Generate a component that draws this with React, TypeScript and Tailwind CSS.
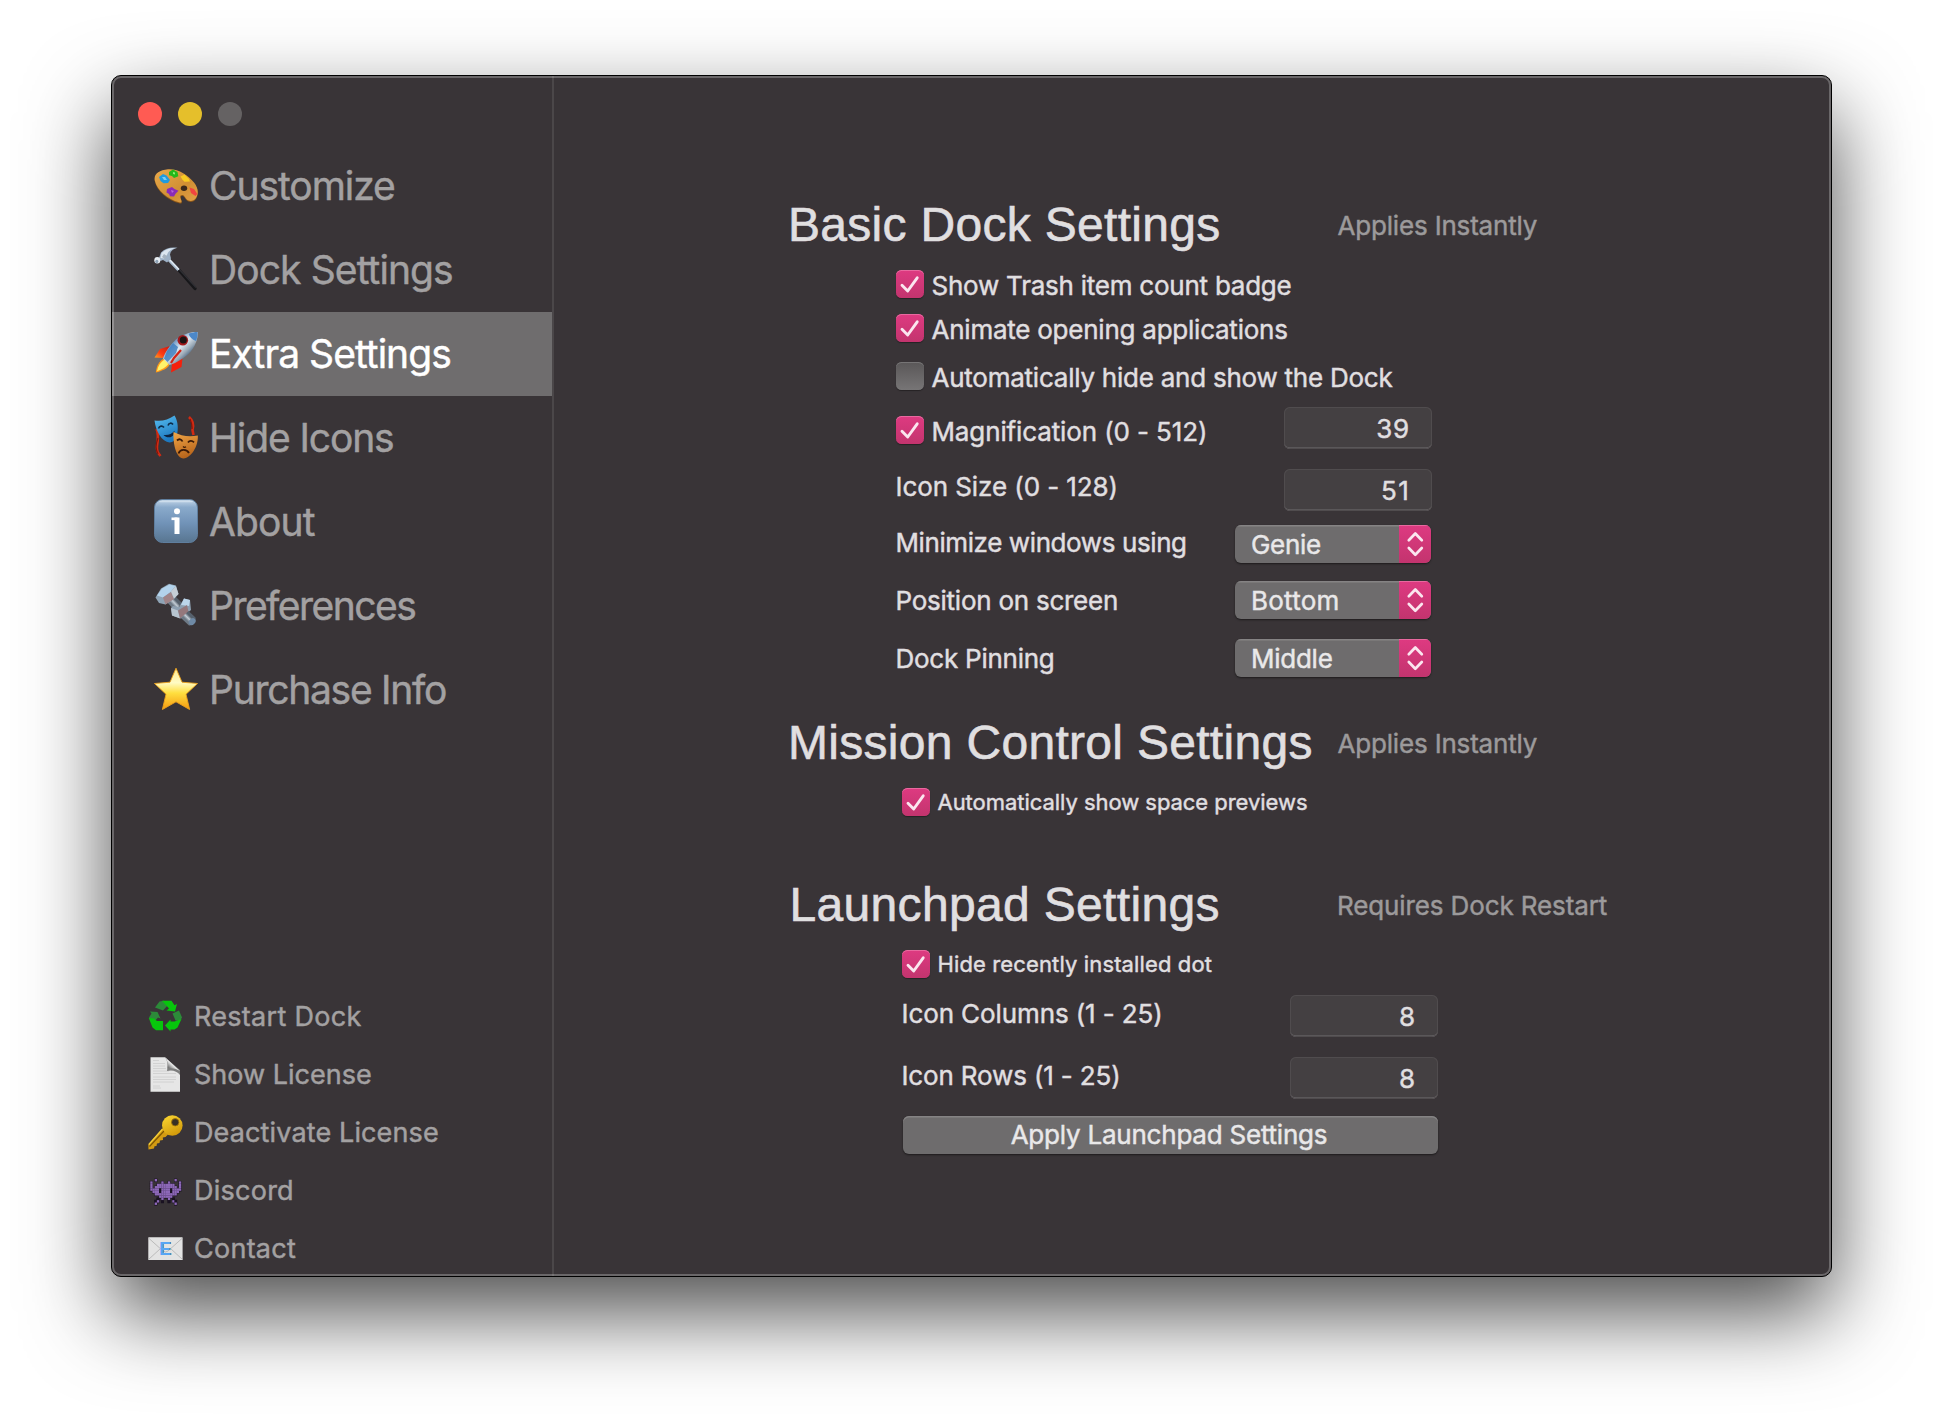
import React from 'react';

/* ---------- sidebar pictograms ---------- */

const Palette = () => (
  <svg viewBox="0 0 44 44" className="size-11">
    <defs>
      <linearGradient id="wood" x1="0" y1="0" x2="1" y2="1">
        <stop offset="0" stopColor="#e8a94c" />
        <stop offset="0.6" stopColor="#d08f33" />
        <stop offset="1" stopColor="#e2a24a" />
      </linearGradient>
    </defs>
    <path d="M14 7.500C24 6.500 34 13 40 20.500C44 25.500 45 31 42 36C40.500 38.500 37 39.500 34.500 38.500C31.500 37.500 31 33.500 28.500 33C26 32.800 26.500 35.500 27.500 37.500C28.500 40 27.500 41 25 40.300C14 37.500 3 28.500 .8 18.500C-.5 12 5 8 14 7.500Z" fill="#8a5518" />
    <path d="M14 6.200C24 5.400 34 12 40 19.500C44 24.500 45 30 42 35C40.500 37.500 37 38.500 34.500 37.500C31.500 36.500 31 32.500 28.500 32C25.500 31.800 26 34.500 27 36.500C28 39 27.500 40 25 39.300C14 36.500 3 27.500 .8 17.500C-.5 11 5 7 14 6.200Z" fill="url(#wood)" />
    <path d="M5 14l4-3 3.500 1.500 3.500 4.500-2 3-4.500 .2-3-2.200Z" fill="#1f9be0" />
    <path d="M8 14l3 0 2 3-3 0Z" fill="#7fcdf2" />
    <path d="M15 9l4-2.500 4.500 2.500 .8 4.200-4.300 1.800-2-2-3-.8Z" fill="#25b81a" />
    <path d="M19 9l2 .5 0 2-2-.5Z" fill="#8ff070" />
    <path d="M26.500 13.500l4-2 4.500 4.500 1 2.500-5.500 .3-2-2Z" fill="#f7cb22" />
    <path d="M35.500 24.500l4.500 1.500 3.300 5-1.800 2-4.500-3Z" fill="#f04440" />
    <path d="M13 26l5-2 2.500 2 4 1.800-3 3-1.500 2.700-4-.2-1-2.300-2.500-1.500Z" fill="#8a2bb8" />
    <path d="M17 27l3 1-2 2Z" fill="#b864dc" />
    <ellipse cx="30" cy="25.300" rx="3.200" ry="2.700" fill="#3a2a1c" />
  </svg>
);

const Hammer = () => (
  <svg viewBox="0 0 44 44" className="size-11">
    <path d="M24 22L41 41.500" stroke="#17171a" strokeWidth="3.400" strokeLinecap="round" />
    <path d="M25 22L42 40.500" stroke="#303035" strokeWidth="1.200" />
    <path d="M15 13L24.500 23" stroke="#a9bdd0" strokeWidth="3" />
    <path d="M15.500 12.500L25 22.500" stroke="#e4edf5" strokeWidth="1.200" />
    <path d="M5 11L7 5.500C11 1 17 0 23.500 .8C19 2 16.500 4 16 7.500L17 11.500L13 15.500L9 13L6.500 14Z" fill="#9db1c6" />
    <path d="M7.500 6C12 1.800 17 .8 22 1C16 2.500 14 5 13 8L10 11.500L6.500 11Z" fill="#dbe6f0" />
    <path d="M10 7l3 2-2 3-3-2Z" fill="#a5b2bf" />
    <ellipse cx="3.300" cy="13.300" rx="3" ry="3.300" fill="#e9eef3" />
    <ellipse cx="2.800" cy="14.500" rx="1.600" ry="1.800" fill="#8fa3b7" />
  </svg>
);

const Rocket = () => (
  <svg viewBox="0 0 44 44" className="size-11">
    <defs>
      <linearGradient id="hull" x1="0.25" y1="0.25" x2="0.75" y2="0.75">
        <stop offset="0" stopColor="#4a7db5" />
        <stop offset="0.45" stopColor="#dfe9f2" />
        <stop offset="0.75" stopColor="#9aa9b6" />
        <stop offset="1" stopColor="#3f5f80" />
      </linearGradient>
      <linearGradient id="fin" x1="1" y1="0" x2="0" y2="1">
        <stop offset="0" stopColor="#c91a10" />
        <stop offset="0.6" stopColor="#ff3b14" />
        <stop offset="1" stopColor="#ffa51f" />
      </linearGradient>
    </defs>
    <path d="M16 15L6 18L.5 26.500L9 27L13 23Z" fill="url(#fin)" />
    <path d="M28.500 27L27.500 36L17 41.500L18 33L22 29Z" fill="#f5200c" />
    <path d="M10 27.500L15.500 33.500C14 37.500 8 40 1.800 41.500C2.500 35 5 30 10 27.500Z" fill="#ff9a18" />
    <path d="M10.500 28.500L14.500 33C12 36.500 8 38.500 3 40.200C4 35 6.500 31 10.500 28.500Z" fill="#fff36b" />
    <path d="M43.500 1C44.500 9 40 18.500 32 25C26 29.500 20 33 15.500 34L9 27.500C11 21 16 14 22 8.500C29 3 37 .5 43.500 1Z" fill="url(#hull)" />
    <path d="M43.500 1C43.800 4 43.200 7 42 10C38 8.500 35.500 6 34.500 2.800C37.500 1.500 40.500 1 43.500 1Z" fill="#4c88c9" />
    <path d="M19 12L13 20L10 27.500L13.500 31L22 22L24 16Z" fill="#3f7fc0" opacity=".85" />
    <circle cx="28.800" cy="9.300" r="5.300" fill="#a3191c" />
    <circle cx="29.300" cy="9" r="3.500" fill="#1c1414" />
    <path d="M27 19L20 27L17 32" stroke="#d42416" strokeWidth="2.200" fill="none" />
  </svg>
);

const Masks = () => (
  <svg viewBox="0 0 44 44" className="size-11">
    <defs>
      <linearGradient id="glad" x1="0" y1="0" x2="0.4" y2="1">
        <stop offset="0" stopColor="#59c0f2" />
        <stop offset="1" stopColor="#1d78bf" />
      </linearGradient>
      <linearGradient id="sad" x1="0" y1="0" x2="0.3" y2="1">
        <stop offset="0" stopColor="#f2a848" />
        <stop offset="1" stopColor="#b9661c" />
      </linearGradient>
    </defs>
    <path d="M35 2C39.500 6 40 10 38.500 15L39.500 20M2.500 14C5 19 4 25 3 31C2.500 36 4 38 6.500 41" stroke="#d22a12" strokeWidth="2.600" fill="none" />
    <path d="M36 4C37 7 38.500 9 38 14M4 23C2 28 1 34 4 39" stroke="#80160c" strokeWidth="1.200" fill="none" />
    <path d="M.5 5.500C8 6.500 14 5 20.500 .5C23 4 24.500 11 23.500 17C22.500 23 20 27.500 15.500 27.500C8 26.500 2 17 .5 5.500Z" fill="url(#glad)" />
    <path d="M4.500 13.500c1-2.800 3.800-3.200 5.500-1M14 10.500c1-2.800 3.500-3 5-1" stroke="#0d2c4a" strokeWidth="1.600" fill="none" />
    <path d="M9.500 20c5 .5 8.500-1 11-4.200c0 4.500-2.500 6.700-5.500 6.500c-2.300 0-4-.8-5.500-2.300Z" fill="#0d2440" />
    <path d="M19.500 17C27 21 35 22 43.800 20.500C44.500 30 38 42.500 29.500 43.500C21.500 42.500 19 28 19.500 17Z" fill="url(#sad)" />
    <path d="M23 25.500c2-2 4.500-1.500 5.500 1M34 27.500c1.500-2 4-2.200 6-.2M24.500 38.500c1.500-4.500 8-5 10.500-.5" stroke="#3a1a08" strokeWidth="1.800" fill="none" />
    <path d="M29 31.500c1 1 2 1 3 .2" stroke="#3a1a08" strokeWidth="1.200" fill="none" />
  </svg>
);

const InfoTile = () => (
  <svg viewBox="0 0 44 44" className="size-11">
    <defs>
      <linearGradient id="tile" x1="0" y1="0" x2="0" y2="1">
        <stop offset="0" stopColor="#c3d6e8" />
        <stop offset="0.18" stopColor="#8aaacb" />
        <stop offset="0.55" stopColor="#7193b8" />
        <stop offset="1" stopColor="#587590" />
      </linearGradient>
    </defs>
    <rect x=".5" y=".5" width="43" height="43" rx="8" fill="url(#tile)" stroke="#5f7e9e" />
    <path d="M6 2.500h32" stroke="#dfeaf4" strokeWidth="1.500" strokeLinecap="round" opacity=".6" />
    <circle cx="23" cy="12.300" r="3" fill="#fff" />
    <rect x="20.500" y="18.500" width="5" height="16.500" fill="#fff" />
    <rect x="17.500" y="18.500" width="6" height="2.600" fill="#fff" />
  </svg>
);

const Bolt = () => (
  <svg viewBox="0 0 44 44" className="size-11">
    <defs>
      <linearGradient id="shaft" x1="0.2" y1="0.8" x2="0.8" y2="0.2">
        <stop offset="0.3" stopColor="#6d7985" />
        <stop offset="0.5" stopColor="#c3cdd6" />
        <stop offset="0.7" stopColor="#56616d" />
      </linearGradient>
    </defs>
    <path d="M13 19L20 12L28 20L21 28Z" fill="url(#shaft)" />
    <path d="M17 25L19 23L25 24L30 15.500L36 17L37 27L27 35.500L18 32.500Z" fill="#8d9fb0" />
    <path d="M30 15.500L36 17L35 23L27 22Z" fill="#bcd6ea" />
    <path d="M17 25L24 27.500L26 35.500L18 32.500Z" fill="#b9c6d1" />
    <path d="M24 27.500L33 22L34.500 29L26 35.500Z" fill="#94787c" />
    <path d="M27 35L34.500 28L41.500 34.500C42.500 38 39.500 42.500 35 42.500Z" fill="url(#shaft)" />
    <ellipse cx="38.200" cy="38.600" rx="3.800" ry="3" transform="rotate(-45 38.200 38.600)" fill="#6f8aa6" />
    <path d="M1.500 14.500L7 5.500L15 .8L22 2.500L24.500 11L20 16L11.500 21.500L5 20Z" fill="#8fa4b6" />
    <path d="M3 12.500L8 5.500L15.500 1.500L21.500 3L16.500 9L9 14.500Z" fill="#b3d3ec" />
    <path d="M9 14.500L17 9L20 16L11.500 21.500Z" fill="#a08488" />
    <path d="M17 8.500L21.800 3L24.500 11L20 15.500Z" fill="#c5ced6" />
  </svg>
);

const Star = () => (
  <svg viewBox="0 0 44 44" className="size-11">
    <defs>
      <linearGradient id="gold" x1="0" y1="0" x2="0" y2="1">
        <stop offset="0" stopColor="#ffe98a" />
        <stop offset="0.35" stopColor="#fffbc4" />
        <stop offset="0.6" stopColor="#ffdf3f" />
        <stop offset="1" stopColor="#f59a10" />
      </linearGradient>
    </defs>
    <path d="M22 1.200L28 15.200L43.500 16.500L32 27.200L35.600 42.500L22 34.800L8.400 42.500L12 27.200L.5 16.500L16 15.200Z" fill="url(#gold)" stroke="#eda21c" strokeWidth=".9" strokeLinejoin="round" />
  </svg>
);

const Recycle = () => (
  <svg viewBox="0 0 35 35" className="size-[35px]">
    <path d="M7 8.500L11.500 2.500L16 1.800L20 6L15 11.500Z" fill="#2c8a39" />
    <path d="M14 1.800H23.500L26.500 6.200L29 5L27 12.500L18.500 11.500L21 9.500Z" fill="#07c60c" />
    <path d="M2 12.500L9.500 13L12.500 19.500L10 18.500L6.500 22.500L1 18.500L3.500 14.500Z" fill="#2c8a39" />
    <path d="M.8 19L6 19.500L9 22H15V31.300H8L4.500 28.500Z" fill="#07c60c" />
    <path d="M24.500 14.500L31 11.500L34 18.500L32 22L27.500 21.500Z" fill="#2c8a39" />
    <path d="M33.500 20L29.500 28.500L26.500 30.500H22.500V32.500L17 26.500L22.500 20.500V22.500H26.500Z" fill="#07c60c" />
  </svg>
);

const Page = () => (
  <svg viewBox="0 0 35 35" className="size-[35px]">
    <defs>
      <linearGradient id="fold" x1="0" y1="1" x2="1" y2="0">
        <stop offset="0.25" stopColor="#777" />
        <stop offset="0.5" stopColor="#f5f5f5" />
        <stop offset="1" stopColor="#d5d5d5" />
      </linearGradient>
    </defs>
    <path d="M2.500 .3H17L32 14.500V34.700H2.500Z" fill="#e6e6e6" />
    <path d="M5 3.500h6M5 6.500h12M5 9h12M5 11.500h13M5 14h16M5 16.500h23M5 20h23M5 22.500h23M5 25h21M5 29h7M5 31h8" stroke="#cfcfcf" strokeWidth=".9" />
    <path d="M17 .3C20 4 20 9 19 14C24 12.500 29 14 32 18L32 13Z" fill="#7d7d7d" />
    <path d="M17 .3C20 4 20 8 19.500 11.500C24 10.500 29 12 32 14Z" fill="url(#fold)" />
  </svg>
);

const Key = () => (
  <svg viewBox="0 0 35 35" className="size-[35px]">
    <defs>
      <linearGradient id="brass" x1="0.2" y1="0" x2="0.7" y2="1">
        <stop offset="0" stopColor="#f9d431" />
        <stop offset="1" stopColor="#cf9608" />
      </linearGradient>
    </defs>
    <path d="M14.500 13.500L20 19.500L17.500 22L14.800 22.500L15 25L12 25.500L11.500 28L9 28.500L8.500 31L6.500 31.300L6 33.500L.5 34.500L.3 29.500Z" fill="#d39b12" />
    <path d="M16 16L1.500 31.500" stroke="#7a5504" strokeWidth="1.100" />
    <path d="M14.500 14L.8 29.500" stroke="#f3cf3c" strokeWidth="1.200" />
    <circle cx="24.300" cy="10.500" r="10.300" fill="url(#brass)" />
    <circle cx="27.200" cy="7.300" r="3.700" fill="#383025" stroke="#a87806" strokeWidth=".8" />
  </svg>
);

const INVADER = [
  '..P........P..',
  'P....P..P....P',
  'P..PPPPPPPP..P',
  'P.PPPPPPPPPP.P',
  'PPPPKPPPPKPPPP',
  '.PPPKPPPPKPPP.',
  '..PPPPPPPPPP..',
  '....PPPPPP....',
  '...K.P..P.K...',
  '..KP.K..K.PK..',
  '..P........P..',
];

const Invader = () => {
  const cells = INVADER.flatMap((row, y) => row.split('').map((c, x) => ({ c, x, y }))).filter((k) => k.c !== '.');
  return (
    <svg viewBox="0 0 35 35" className="size-[35px]">
      {cells.map((k) => (
        <rect key={`o${k.x}-${k.y}`} x={1.800 + k.x * 2.2} y={5.600 + k.y * 2.350} width="3.200" height="3.500" fill="#1a1222" />
      ))}
      {cells.map((k) => (
        <rect key={`f${k.x}-${k.y}`} x={2.300 + k.x * 2.2} y={6 + k.y * 2.350} width="2.300" height="2.400" fill={k.c === 'P' ? '#8d68b8' : '#1a1222'} />
      ))}
    </svg>
  );
};

const Mail = () => (
  <svg viewBox="0 0 35 35" className="size-[35px]">
    <rect x=".3" y="6.300" width="34.300" height="22.700" rx=".6" fill="#e3e3e3" />
    <path d="M.5 7L15 20Q17.500 22 20 20L34.500 7M.5 28.500L12.500 17.500M34.500 28.500L22.500 17.500" stroke="#b5b5b5" strokeWidth=".9" fill="none" />
    <text x="17.800" y="24.300" textAnchor="middle" className="font-['Liberation_Sans'] text-[18px] font-bold" fill="#33597f">E</text>
    <text x="17.200" y="23.600" textAnchor="middle" className="font-['Liberation_Sans'] text-[18px] font-bold" fill="#58a6f4">E</text>
  </svg>
);

/* ---------- form controls ---------- */

const CheckBox = ({ on = false }: { on?: boolean }) =>
  on ? (
    <span className="size-7 shrink-0 rounded-[5.5px] bg-linear-to-b from-[#de3a81] to-[#c3346e] shadow-[inset_0_1px_0_#e8699f,0_1px_1px_rgba(0,0,0,.35)]">
      <svg viewBox="0 0 28 28" className="size-7">
        <path d="M6 15.300L11.700 21L21.200 7.800" fill="none" stroke="#fbe6ef" strokeWidth="2.900" strokeLinecap="round" strokeLinejoin="round" />
      </svg>
    </span>
  ) : (
    <span className="size-7 shrink-0 rounded-[5.5px] bg-linear-to-b from-[#5a5758] to-[#777576] shadow-[inset_0_1px_0_#767475,0_1px_1px_rgba(0,0,0,.35)]" />
  );

const CheckRow = ({ label, on, className, text }: { label: string; on?: boolean; className: string; text: string }) => (
  <div className={`flex h-7 items-center gap-[7.5px] ${className}`}>
    <CheckBox on={on} />
    <span className={text}>{label}</span>
  </div>
);

const Field = ({ value, className }: { value: string; className: string }) => (
  <div className={`flex h-[42px] w-[148px] items-center justify-end rounded-[6px] bg-[#444042] pt-0.5 shadow-[inset_0_0_0_1px_#504c4e,inset_0_-2px_0_-0.5px_#716e70] ${className}`}>
    {value}
  </div>
);

const Select = ({ value, tracking }: { value: string; tracking: string }) => (
  <div className="flex h-[38px] w-[196px] overflow-hidden rounded-[6px] bg-[#6e6c6d] shadow-[0_1px_2px_rgba(0,0,0,.5)]">
    <div className={`flex flex-1 items-center pt-px pl-4 text-[#e9e8e9] shadow-[inset_0_1.5px_0_#858384] ${tracking}`}>{value}</div>
    <div className="w-8 bg-linear-to-b from-[#de3a81] to-[#c3346e] shadow-[inset_0_1px_0_#e8699f]">
      <svg viewBox="0 0 32 38" className="h-[38px] w-8">
        <path d="M9.800 15.200L16.300 8.500L22.800 15.200M9.800 23L16.300 29.700L22.800 23" fill="none" stroke="#fbe6ef" strokeWidth="2.700" strokeLinecap="round" strokeLinejoin="round" />
      </svg>
    </div>
  </div>
);

const Heading = ({ title, hint, className, tracking }: { title: string; hint: string; className: string; tracking: string }) => (
  <div className={`flex h-[50px] items-center ${className}`}>
    <h2 className={`font-['Liberation_Sans',sans-serif] text-[48px] leading-[50px] whitespace-nowrap [-webkit-text-stroke:0.6px_#e0dfe0] ${tracking}`}>{title}</h2>
    <span className="mt-0.5 w-[300px] text-[#9c9a9b]">{hint}</span>
  </div>
);

const NAV = [
  { label: 'Customize', icon: <Palette />, tracking: 'tracking-[-1.05px]' },
  { label: 'Dock Settings', icon: <Hammer />, tracking: 'tracking-[-0.9px]' },
  { label: 'Extra Settings', icon: <Rocket />, tracking: 'tracking-[-0.95px]', active: true },
  { label: 'Hide Icons', icon: <Masks />, tracking: 'tracking-[-1.12px]' },
  { label: 'About', icon: <InfoTile />, tracking: 'tracking-[-0.9px]' },
  { label: 'Preferences', icon: <Bolt />, tracking: 'tracking-[-1.53px]' },
  { label: 'Purchase Info', icon: <Star />, tracking: 'tracking-[-1.27px]' },
];

const LINKS = [
  { label: 'Restart Dock', icon: <Recycle />, tracking: 'tracking-[0.29px]' },
  { label: 'Show License', icon: <Page />, tracking: 'tracking-[0.01px]' },
  { label: 'Deactivate License', icon: <Key />, tracking: 'tracking-[0.13px]' },
  { label: 'Discord', icon: <Invader />, tracking: 'tracking-[0.25px]' },
  { label: 'Contact', icon: <Mail />, tracking: 'tracking-[0.26px]' },
];

const Sidebar = () => (
  <aside className="flex w-[442px] shrink-0 flex-col border-r-2 border-[#4b4749] text-[#a3a1a2]">
    <div className="flex h-[68px] gap-4 pt-[26px] pl-[26px]">
      <span className="size-6 rounded-full bg-[#ff5b53]" />
      <span className="size-6 rounded-full bg-[#e5bf2b]" />
      <span className="size-6 rounded-full bg-[#656263]" />
    </div>
    <nav className="text-[39px] leading-none">
      {NAV.map((n) => (
        <div key={n.label} className={`flex h-21 items-center gap-[11px] pl-[42px] ${n.active ? 'bg-[#6f6d6e] text-white' : ''}`}>
          <span className="mb-0.5">{n.icon}</span>
          <span className={`mb-0.5 ${n.tracking}`}>{n.label}</span>
        </div>
      ))}
    </nav>
    <div className="mt-auto mb-[-1px] text-[27px] leading-none">
      {LINKS.map((n) => (
        <div key={n.label} className="flex h-[58px] items-center gap-[11px] pl-9">
          {n.icon}
          <span className={n.tracking}>{n.label}</span>
        </div>
      ))}
    </div>
  </aside>
);

export default function App() {
  return (
    <div className="h-[1424px] w-[1943px] overflow-hidden bg-white pt-[75px] pl-[111px] font-['Inter',sans-serif] [-webkit-text-stroke:0.45px]">
      <div className="relative flex h-[1202px] w-[1721px] overflow-visible rounded-[10px] border border-black bg-[#393437] shadow-[0_36px_84px_rgba(0,0,0,.7)]">
        <Sidebar />
        <main className="flex flex-1 flex-col text-[26px] leading-7 whitespace-nowrap text-[#e0dfe0]">
          <Heading title="Basic Dock Settings" hint="Applies Instantly" className="mt-[124px] ml-[234px] tracking-[-0.18px]" tracking="w-[549.5px] tracking-[0.3px]" />
          <CheckRow on label="Show Trash item count badge" className="mt-5 ml-[342px]" text="pt-[3px] tracking-[-0.24px]" />
          <CheckRow on label="Animate opening applications" className="mt-4 ml-[342px]" text="pt-[3px] tracking-[-0.24px]" />
          <CheckRow label="Automatically hide and show the Dock" className="mt-5 ml-[342px]" text="pt-[3px] tracking-[-0.24px]" />
          <div className="mt-[17px] ml-[342px] flex h-[42px] w-[536px] items-start justify-between">
            <CheckRow on label="Magnification (0 - 512)" className="mt-[9px]" text="pt-[3px] tracking-[-0.12px]" />
            <Field value="39" className="pr-[22px] tracking-[0.8px]" />
          </div>
          <div className="mt-5 ml-[341.5px] flex h-[42px] w-[536.5px] justify-between">
            <span className="mt-1 tracking-[-0.08px]">Icon Size (0 - 128)</span>
            <Field value="51" className="pr-[21.5px] tracking-[1.6px]" />
          </div>
          <div className="mt-3.5 ml-[341.5px] flex h-[38px] w-[535.5px] justify-between">
            <span className="mt-1 tracking-[-0.4px]">Minimize windows using</span>
            <Select value="Genie" tracking="tracking-[-0.3px]" />
          </div>
          <div className="mt-[18px] ml-[341.5px] flex h-[38px] w-[535.5px] justify-between">
            <span className="mt-1.5 tracking-[-0.25px]">Position on screen</span>
            <Select value="Bottom" tracking="tracking-[0.25px]" />
          </div>
          <div className="mt-5 ml-[341.5px] flex h-[38px] w-[535.5px] justify-between">
            <span className="mt-1.5 tracking-[-0.25px]">Dock Pinning</span>
            <Select value="Middle" tracking="tracking-[-0.25px]" />
          </div>

          <Heading title="Mission Control Settings" hint="Applies Instantly" className="mt-[41px] ml-[234px] tracking-[-0.18px]" tracking="w-[549.5px] tracking-[0.3px]" />
          <CheckRow on label="Automatically show space previews" className="mt-5 ml-[348px]" text="text-[22px] tracking-[-0.04px]" />

          <Heading title="Launchpad Settings" hint="Requires Dock Restart" className="mt-[64px] ml-[235.5px] tracking-[-0.12px]" tracking="w-[547.5px] tracking-[0.33px]" />
          <CheckRow on label="Hide recently installed dot" className="mt-5 ml-[348px]" text="text-[22px] tracking-[0.13px]" />
          <div className="mt-[17px] ml-[347.5px] flex h-[42px] w-[536.5px] justify-between">
            <span className="mt-[5px] tracking-[-0.1px]">Icon Columns (1 - 25)</span>
            <Field value="8" className="pr-[23px]" />
          </div>
          <div className="mt-5 ml-[347.5px] flex h-[42px] w-[536.5px] justify-between">
            <span className="mt-[5px] tracking-[-0.15px]">Icon Rows (1 - 25)</span>
            <Field value="8" className="pr-[23px]" />
          </div>
          <button className="mt-[17px] ml-[349px] flex h-[38px] w-[535px] items-center justify-center rounded-[6px] bg-[#6e6c6d] pr-[3px] tracking-[-0.22px] text-[#e9e8e9] shadow-[inset_0_1.5px_0_#858384,0_1px_2px_rgba(0,0,0,.5)]">
            Apply Launchpad Settings
          </button>
        </main>
        <div className="pointer-events-none absolute inset-0 rounded-[9px] border-2 border-white/25" />
      </div>
    </div>
  );
}
